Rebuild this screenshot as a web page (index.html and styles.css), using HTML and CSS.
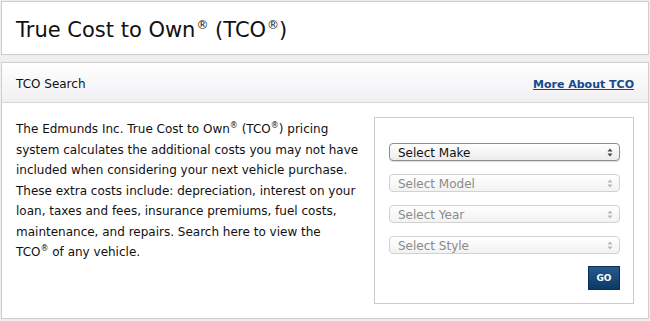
FILE: index.html
```html
<!DOCTYPE html>
<html>
<head>
<meta charset="utf-8">
<link rel="stylesheet" href="styles.css">
</head>
<body>
<div class="page">
  <div class="card title-card">
    <h1 class="title">True Cost to Own<sup>®</sup> (TCO<sup>®</sup>)</h1>
  </div>
  <div class="card search-card">
    <div class="search-head">
      <span class="head-label">TCO Search</span>
      <a class="head-link" href="#">More About TCO</a>
    </div>
    <div class="search-body">
      <p class="desc">The Edmunds Inc. True Cost to Own<sup>®</sup> (TCO<sup>®</sup>) pricing system calculates the additional costs you may not have included when considering your next vehicle purchase. These extra costs include: depreciation, interest on your loan, taxes and fees, insurance premiums, fuel costs, maintenance, and repairs. Search here to view the<br>TCO<sup>®</sup> of any vehicle.</p>
      <div class="picker">
        <div class="sel sel-active"><span>Select Make</span><svg class="arrows" width="6" height="9" viewBox="0 0 6 9"><path d="M3 0.5 L5.5 3.5 H0.5 Z M3 8.5 L5.5 5.5 H0.5 Z"/></svg></div>
        <div class="sel sel-off"><span>Select Model</span><svg class="arrows" width="6" height="9" viewBox="0 0 6 9"><path d="M3 0.5 L5.5 3.5 H0.5 Z M3 8.5 L5.5 5.5 H0.5 Z"/></svg></div>
        <div class="sel sel-off"><span>Select Year</span><svg class="arrows" width="6" height="9" viewBox="0 0 6 9"><path d="M3 0.5 L5.5 3.5 H0.5 Z M3 8.5 L5.5 5.5 H0.5 Z"/></svg></div>
        <div class="sel sel-off"><span>Select Style</span><svg class="arrows" width="6" height="9" viewBox="0 0 6 9"><path d="M3 0.5 L5.5 3.5 H0.5 Z M3 8.5 L5.5 5.5 H0.5 Z"/></svg></div>
        <button class="go">GO</button>
      </div>
    </div>
  </div>
</div>
</body>
</html>
```
FILE: styles.css
```css
html, body {
  margin: 0;
  padding: 0;
  background: #efefef;
}
body {
  font-family: "DejaVu Sans", Verdana, sans-serif;
  color: #111;
}
.page {
  padding: 1px 1px 0 1px;
  width: 650px;
  box-sizing: border-box;
  display: flex;
  flex-direction: column;
  gap: 7px;
}
.card {
  background: #fff;
  border: 1px solid #cfcfcf;
}
.title-card {
  height: 52px;
  display: flex;
  align-items: center;
  padding-left: 14px;
}
.title {
  margin: 0;
  font-size: 21px;
  font-weight: normal;
  line-height: 26px;
  padding-top: 3px;
  color: #111;
}
.title sup {
  font-size: 12px;
  vertical-align: 8px;
  line-height: 1;
  margin-left: 1px;
}
.search-card {
  height: 255px;
  display: flex;
  flex-direction: column;
}
.search-head {
  height: 40px;
  border-bottom: 1px solid #d6d6d6;
  background: linear-gradient(#ffffff, #f1eff2);
  display: flex;
  align-items: center;
  justify-content: space-between;
  padding: 3px 14px 0 14px;
  box-sizing: border-box;
  font-size: 12px;
}
.head-label {
  color: #111;
}
.head-link {
  color: #154b8e;
  font-weight: bold;
  font-size: 11px;
  text-decoration: underline;
}
.search-body {
  display: grid;
  grid-template-columns: 352px 260px;
  gap: 6px;
  padding: 14px;
}
.desc {
  margin: 0;
  padding-top: 2px;
  font-size: 12px;
  line-height: 20.5px;
  color: #111;
}
.desc sup {
  font-size: 8px;
  line-height: 1;
  vertical-align: 5px;
}
.picker {
  border: 1px solid #cccccc;
  height: 187px;
  box-sizing: border-box;
  padding: 25px 13px 0 14px;
  display: flex;
  flex-direction: column;
  gap: 13px;
}
.sel {
  height: 18px;
  box-sizing: border-box;
  border-radius: 4px;
  display: flex;
  align-items: center;
  justify-content: space-between;
  padding: 0 6px 0 8px;
  font-size: 12px;
}
.sel span {
  padding-top: 1px;
}
.sel-active {
  border: 1px solid #8e8e8e;
  background: linear-gradient(#ffffff, #ececec);
  box-shadow: 0 1px 1px rgba(0,0,0,0.15);
  color: #111;
}
.sel-active .arrows {
  fill: #444;
}
.sel-off {
  border: 1px solid #d2d2d2;
  background: linear-gradient(#ffffff, #f2f2f2);
  color: #8a8a8a;
}
.sel-off .arrows {
  fill: #b5b5b5;
}
.go {
  align-self: flex-end;
  margin-top: -1px;
  width: 32px;
  height: 24px;
  border: 1px solid #0b2f57;
  background: linear-gradient(#265a8e, #0c3866);
  color: #fff;
  font-family: "DejaVu Sans", Verdana, sans-serif;
  font-weight: bold;
  font-size: 9px;
  padding: 0;
}
```
